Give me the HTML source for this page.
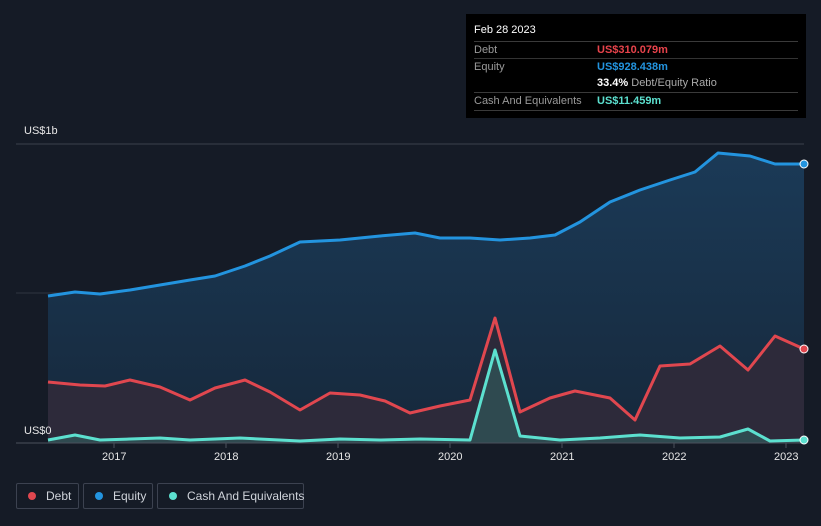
<!DOCTYPE html>
<html><head><style>
body{margin:0;background:#151b26;font-family:"Liberation Sans",sans-serif;}
.wrap{position:relative;width:821px;height:526px;overflow:hidden;background:#151b26}
.tip{position:absolute;left:466px;top:14px;width:340px;height:104px;background:#000;color:#fff;font-size:11px}
.row{position:absolute;left:8px;right:8px;border-top:1px solid #3a3a3a;height:17px;line-height:17px}
.row .l{position:absolute;left:0;color:#9a9a9a}
.row .v{position:absolute;left:123px;font-weight:bold}
.leg{position:absolute;top:483px;height:26px;border:1px solid #3c4250;border-radius:2px;color:#cfd3da;font-size:12px;line-height:24px;box-sizing:border-box;white-space:nowrap}
.dot{display:inline-block;width:8px;height:8px;border-radius:50%;margin:0 10px 0 11px;vertical-align:0px}
.ax{position:absolute;color:#e6e6e6;font-size:11px}
</style></head><body><div class="wrap">
<svg width="821" height="526" style="position:absolute;left:0;top:0">
<defs>
<linearGradient id="eg" x1="0" y1="0" x2="0" y2="1"><stop offset="0" stop-color="#1b3a57"/><stop offset="1" stop-color="#16283b"/></linearGradient>
</defs>
<line x1="16" y1="144" x2="804" y2="144" stroke="#3a404c"/>
<line x1="16" y1="293" x2="804" y2="293" stroke="#2e3440"/>
<path d="M48,296 L75,292 L100,294 L130,290 L160,285 L190,280 L215,276 L245,266 L270,256 L300,242 L340,240 L380,236 L415,233 L440,238 L470,238 L500,240 L530,238 L555,235 L580,222 L610,202 L640,190 L670,180 L695,172 L718,153 L750,156 L775,164 L804,164 L804,443 L48,443Z" fill="url(#eg)"/>
<path d="M48,382 L80,385 L105,386 L130,380 L160,387 L190,400 L215,388 L245,380 L270,392 L300,410 L330,393 L360,395 L385,401 L410,413 L440,406 L470,400 L495,318 L520,412 L550,398 L575,391 L610,398 L635,420 L660,366 L690,364 L720,346 L748,370 L775,336 L804,349 L804,443 L48,443Z" fill="#2d2a3a"/>
<path d="M48,440 L75,435 L100,440 L130,439 L160,438 L190,440 L240,438 L300,441 L340,439 L380,440 L420,439 L470,440 L495,350 L520,436 L560,440 L600,438 L640,435 L680,438 L720,437 L748,429 L770,441 L804,440 L804,443 L48,443Z" fill="#2f4a50"/>
<path d="M48,296 L75,292 L100,294 L130,290 L160,285 L190,280 L215,276 L245,266 L270,256 L300,242 L340,240 L380,236 L415,233 L440,238 L470,238 L500,240 L530,238 L555,235 L580,222 L610,202 L640,190 L670,180 L695,172 L718,153 L750,156 L775,164 L804,164" fill="none" stroke="#2394df" stroke-width="3" stroke-linejoin="round"/>
<path d="M48,382 L80,385 L105,386 L130,380 L160,387 L190,400 L215,388 L245,380 L270,392 L300,410 L330,393 L360,395 L385,401 L410,413 L440,406 L470,400 L495,318 L520,412 L550,398 L575,391 L610,398 L635,420 L660,366 L690,364 L720,346 L748,370 L775,336 L804,349" fill="none" stroke="#e0474f" stroke-width="3" stroke-linejoin="round"/>
<path d="M48,440 L75,435 L100,440 L130,439 L160,438 L190,440 L240,438 L300,441 L340,439 L380,440 L420,439 L470,440 L495,350 L520,436 L560,440 L600,438 L640,435 L680,438 L720,437 L748,429 L770,441 L804,440" fill="none" stroke="#5ce0cf" stroke-width="3" stroke-linejoin="round"/>
<line x1="16" y1="443" x2="804" y2="443" stroke="#4a505c"/>
<g stroke="#4a505c"><line x1="114" y1="443" x2="114" y2="448"/><line x1="226" y1="443" x2="226" y2="448"/><line x1="338" y1="443" x2="338" y2="448"/><line x1="450" y1="443" x2="450" y2="448"/><line x1="562" y1="443" x2="562" y2="448"/><line x1="674" y1="443" x2="674" y2="448"/><line x1="786" y1="443" x2="786" y2="448"/></g>
<circle cx="804" cy="164" r="4" fill="#2394df" stroke="#fff" stroke-width="1"/>
<circle cx="804" cy="349" r="4" fill="#e0474f" stroke="#fff" stroke-width="1"/>
<circle cx="804" cy="440" r="4" fill="#5ce0cf" stroke="#fff" stroke-width="1"/>
</svg>
<div class="ax" style="left:24px;top:125px">US$1b</div>
<div class="ax" style="left:24px;top:425px">US$0</div>
<div class="ax" style="left:102px;top:451px">2017</div>
<div class="ax" style="left:214px;top:451px">2018</div>
<div class="ax" style="left:326px;top:451px">2019</div>
<div class="ax" style="left:438px;top:451px">2020</div>
<div class="ax" style="left:550px;top:451px">2021</div>
<div class="ax" style="left:662px;top:451px">2022</div>
<div class="ax" style="left:774px;top:451px">2023</div>
<div class="tip">
<div style="position:absolute;left:8px;top:10px;font-size:11px">Feb 28 2023</div>
<div class="row" style="top:27px"><span class="l">Debt</span><span class="v" style="color:#e8434b">US$310.079m</span></div>
<div class="row" style="top:44px;border-top-color:#333"><span class="l">Equity</span><span class="v" style="color:#2394df">US$928.438m</span></div>
<div class="row" style="top:61px;border-top:none"><span class="v" style="color:#fff">33.4% <span style="font-weight:normal;color:#aaa">Debt/Equity Ratio</span></span></div>
<div class="row" style="top:78px"><span class="l">Cash And Equivalents</span><span class="v" style="color:#5ce0cf">US$11.459m</span></div>
<div class="row" style="top:96px;height:0"></div>
</div>
<div class="leg" style="left:16px;width:63px"><span class="dot" style="background:#e0474f"></span>Debt</div>
<div class="leg" style="left:83px;width:70px"><span class="dot" style="background:#2394df"></span>Equity</div>
<div class="leg" style="left:157px;width:147px"><span class="dot" style="background:#5ce0cf"></span>Cash And Equivalents</div>
</div></body></html>
